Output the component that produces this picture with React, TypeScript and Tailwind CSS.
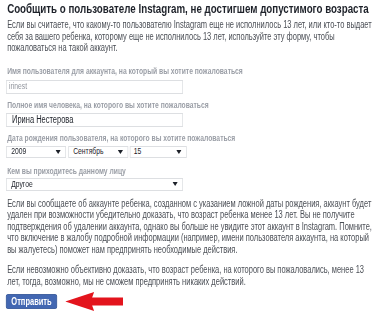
import React from "react";

const Caret = () => (
  <svg width="7" height="4" viewBox="0 0 7 4" preserveAspectRatio="none" className="shrink-0">
    <path d="M0 0 L7 0 L3.5 4 Z" fill="#1d2129" />
  </svg>
);

function Select({ value, className }: { value: string; className: string }) {
  return (
    <div
      className={`flex items-center justify-between border border-[#dddfe2] bg-white pr-[6px] text-[9px] leading-none text-[#1d2129] ${className}`}
    >
      <span>{value}</span>
      <Caret />
    </div>
  );
}

const P = ({ lines, className }: { lines: string[]; className: string }) => (
  <div className={`ml-[1.5px] text-[10px] leading-[11.5px] text-[#4b4f56] ${className}`}>
    {lines.map((l) => (
      <div key={l} className="whitespace-nowrap">
        {l}
      </div>
    ))}
  </div>
);

const Label = ({ children, className }: { children: React.ReactNode; className: string }) => (
  <div className={`ml-[1.5px] whitespace-nowrap text-[9px] font-bold leading-[12px] text-[#9a9ea6] ${className}`}>
    {children}
  </div>
);

export default function App() {
  return (
    <div
      className="h-[320px] w-[384px] overflow-hidden bg-white"
      style={{ fontFamily: '"Liberation Sans", Arial, sans-serif' }}
    >
      <div className="w-[512px] origin-top-left scale-x-[0.75] pl-[8px]">
        <h1 className="ml-[1.5px] whitespace-nowrap text-[13px] font-bold leading-[18px] text-[#1d2129]">
          Сообщить о пользователе Instagram, не достигшем допустимого возраста
        </h1>
        <P
          className="mt-[1px]"
          lines={[
            "Если вы считаете, что какому-то пользователю Instagram еще не исполнилось 13 лет, или кто-то выдает",
            "себя за вашего ребенка, которому еще не исполнилось 13 лет, используйте эту форму, чтобы",
            "пожаловаться на такой аккаунт.",
          ]}
        />

        <Label className="mt-[11px]">Имя пользователя для аккаунта, на который вы хотите пожаловаться</Label>
        <div className="mt-[3px] flex h-[14px] w-[236px] items-center border border-[#dddfe2] pl-[3px] text-[9px] text-[#90949c]">
          irinest
        </div>

        <Label className="mt-[5px]">Полное имя человека, на которого вы хотите пожаловаться</Label>
        <div className="mt-[2px] flex h-[14px] w-[236px] items-center border border-[#dddfe2] pl-[7px] text-[10px] text-[#1d2129]">
          Ирина Нестерова
        </div>

        <Label className="mt-[5px]">Дата рождения пользователя, на которого вы хотите пожаловаться</Label>
        <div className="mt-[2px] flex gap-[2.67px]">
          <Select value="2009" className="h-[12px] w-[80px] pl-[6px]" />
          <Select value="Сентябрь" className="h-[12px] w-[80px] pl-[6px]" />
          <Select value="15" className="h-[12px] w-[76px] pl-[4px]" />
        </div>

        <Label className="mt-[7px]">Кем вы приходитесь данному лицу</Label>
        <div className="mt-[1px]">
          <Select value="Другое" className="h-[13px] w-[236px] pl-[6px]" />
        </div>

        <P
          className="mt-[7px]"
          lines={[
            "Если вы сообщаете об аккаунте ребенка, созданном с указанием ложной даты рождения, аккаунт будет",
            "удален при возможности убедительно доказать, что возраст ребенка менее 13 лет. Вы не получите",
            "подтверждения об удалении аккаунта, однако вы больше не увидите этот аккаунт в Instagram. Помните,",
            "что включение в жалобу подробной информации (например, имени пользователя аккаунта, на который",
            "вы жалуетесь) поможет нам предпринять необходимые действия.",
          ]}
        />
        <P
          className="mt-[9px]"
          lines={[
            "Если невозможно объективно доказать, что возраст ребенка, на которого вы пожаловались, менее 13",
            "лет, тогда, возможно, мы не сможем предпринять никаких действий.",
          ]}
        />

        <div className="mt-[5px] flex items-center">
          <button className="flex h-[15px] w-[68px] items-center justify-center rounded-[2px] border border-[#365899] bg-[#4267b2] text-[10px] font-bold text-white">
            Отправить
          </button>
          <svg width="77" height="19" viewBox="0 0 58 19" preserveAspectRatio="none" className="ml-[10.67px]">
            <path d="M0 9.5 L29 0 L27 5.5 L58 5.5 L58 13.5 L27 13.5 L29 19 Z" fill="#e3141d" />
          </svg>
        </div>
      </div>
    </div>
  );
}
